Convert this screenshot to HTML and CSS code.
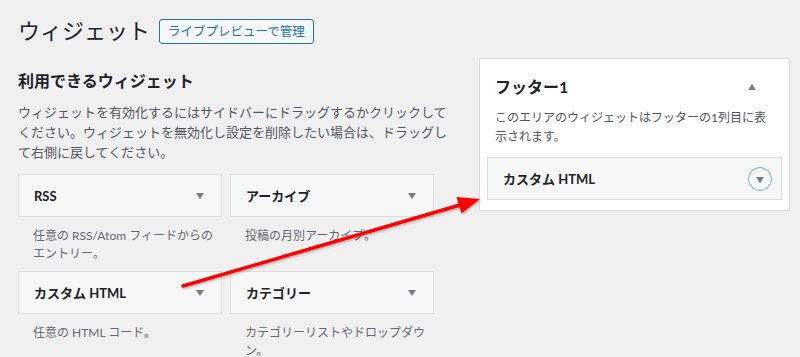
FILE: index.html
```html
<!DOCTYPE html>
<html lang="ja">

<head>
    <meta charset="UTF-8">
    <meta name="viewport" content="width=device-width, initial-scale=1.0">
    <link rel="stylesheet" href="styles.css">
</head>

<body>
    <div class="wrap">
        <div class="page-head">
            <h1 class="page-title">ウィジェット</h1>
            <a class="page-action">ライブプレビューで管理</a>
        </div>
        <div class="columns">
            <div class="available">
                <h2 class="section-title">利用できるウィジェット</h2>
                <p class="section-desc">ウィジェットを有効化するにはサイドバーにドラッグするかクリックしてください。ウィジェットを無効化し設定を削除したい場合は、ドラッグして右側に戻してください。</p>
                <div class="widget-grid">
                    <div class="widget">
                        <div class="widget-top">
                            <span class="widget-name">RSS</span>
                            <span class="caret"></span>
                        </div>
                        <p class="widget-desc">任意の RSS/Atom フィードからのエントリー。</p>
                    </div>
                    <div class="widget">
                        <div class="widget-top">
                            <span class="widget-name">アーカイブ</span>
                            <span class="caret"></span>
                        </div>
                        <p class="widget-desc">投稿の月別アーカイブ。</p>
                    </div>
                    <div class="widget">
                        <div class="widget-top">
                            <span class="widget-name">カスタム HTML</span>
                            <span class="caret"></span>
                        </div>
                        <p class="widget-desc">任意の HTML コード。</p>
                    </div>
                    <div class="widget">
                        <div class="widget-top">
                            <span class="widget-name">カテゴリー</span>
                            <span class="caret"></span>
                        </div>
                        <p class="widget-desc">カテゴリーリストやドロップダウン。</p>
                    </div>
                </div>
            </div>
            <div class="sidebars">
                <div class="sidebar">
                    <div class="sidebar-head">
                        <h2 class="sidebar-title">フッター1</h2>
                        <span class="caret up"></span>
                    </div>
                    <p class="sidebar-desc">このエリアのウィジェットはフッターの1列目に表示されます。</p>
                    <div class="widget-top in-sidebar">
                        <span class="widget-name">カスタム HTML</span>
                        <span class="toggle"><span class="caret"></span></span>
                    </div>
                </div>
            </div>
        </div>
    </div>

    <!-- annotation arrow -->
    <svg class="arrow" width="800" height="357" viewBox="0 0 800 357" xmlns="http://www.w3.org/2000/svg">
        <defs>
            <filter id="shade" x="-10%" y="-10%" width="120%" height="130%">
                <feDropShadow dx="1" dy="1.5" stdDeviation="1" flood-color="#000" flood-opacity="0.25" />
            </filter>
        </defs>
        <g filter="url(#shade)" fill="#ff0000">
            <line x1="183" y1="286" x2="460" y2="205" stroke="#ff0000" stroke-width="3.5" stroke-linecap="round" />
            <polygon points="480,199 456.5,197 461.5,213.5" />
        </g>
    </svg>
</body>

</html>
```

FILE: styles.css
```css
body {
    margin: 0;
    padding: 0;
    background: #f0f0f1;
    color: #1d2327;
    font-family: Lato, "Noto Sans CJK JP", sans-serif;
    font-size: 13px;
}

.wrap {
    padding: 18px 10px 0 18px;
}

.page-head {
    align-items: center;
    display: flex;
    gap: 9px;
    height: 26px;
}

.page-title {
    font-size: 22px;
    font-weight: 400;
    line-height: 26px;
    margin: 0;
}

.page-action {
    background: #f6f7f7;
    border: 1px solid #2271b1;
    border-radius: 3px;
    color: #2271b1;
    font-size: 12.5px;
    line-height: 23px;
    padding: 0 8px;
}

.columns {
    display: flex;
    gap: 45px;
    margin-top: 14px;
}

.available {
    padding-top: 11px;
    width: 416px;
}

.section-title {
    font-size: 16px;
    font-weight: 700;
    line-height: 24px;
    margin: 0;
}

.section-desc {
    color: #50575e;
    line-height: 20px;
    margin: 9px 0 0;
    width: 432px;
}

.widget-grid {
    display: grid;
    gap: 0 8px;
    grid-template-columns: 204px 204px;
    margin-top: 12px;
}

.widget-top {
    align-items: center;
    background: #f6f7f7;
    border: 1px solid #dcdcde;
    box-sizing: border-box;
    display: flex;
    height: 43px;
    justify-content: space-between;
    padding: 0 17px 0 15px;
}

.widget-name {
    font-size: 13px;
    font-weight: 700;
}

.widget-desc {
    color: #646970;
    font-size: 12px;
    line-height: 18px;
    margin: 10px 0 8px;
    min-height: 36px;
    padding: 0 4px 0 15px;
}

.caret {
    border-left: 4px solid transparent;
    border-right: 4px solid transparent;
    border-top: 6px solid #787c82;
    height: 0;
    width: 0;
}

.caret.up {
    border-bottom: 6px solid #787c82;
    border-top: none;
}

.sidebars {
    width: 311px;
}

.sidebar {
    background: #ffffff;
    border: 1px solid #dcdcde;
    box-sizing: border-box;
    padding: 16px 7px 10px;
}

.sidebar-head {
    align-items: center;
    display: flex;
    justify-content: space-between;
    padding: 0 26px 0 8px;
}

.sidebar-title {
    font-size: 16px;
    font-weight: 700;
    line-height: 24px;
    margin: 0;
}

.sidebar-desc {
    color: #50575e;
    font-size: 12px;
    line-height: 19px;
    margin: 9px 0 11px;
    padding: 0 8px;
}

.in-sidebar {
    padding-right: 9px;
}

.toggle {
    align-items: center;
    border: 1px solid #72aee6;
    border-radius: 50%;
    box-sizing: border-box;
    display: flex;
    height: 24px;
    justify-content: center;
    padding-top: 2px;
    width: 24px;
}

.arrow {
    left: 0;
    pointer-events: none;
    position: absolute;
    top: 0;
}
```
